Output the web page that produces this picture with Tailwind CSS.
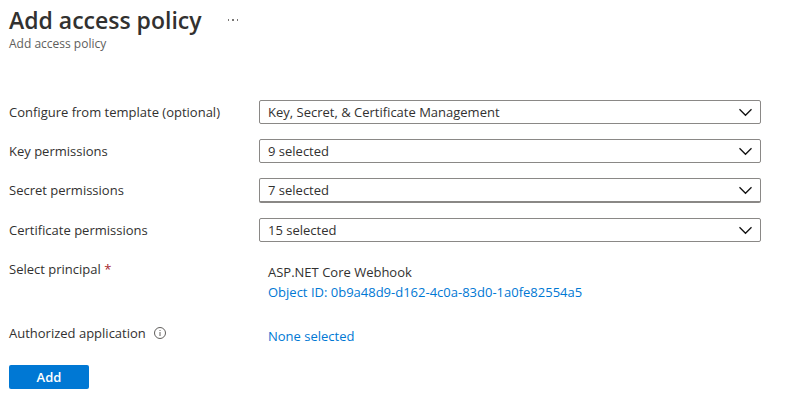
<!DOCTYPE html>
<html lang="en">
<head>
<meta charset="utf-8">
<meta name="viewport" content="width=device-width, initial-scale=1">
<title>Add access policy</title>
<script src="https://cdn.jsdelivr.net/npm/@tailwindcss/browser@4"></script>
</head>
<body class="bg-white pl-[9px] pr-[27px] font-['Segoe_UI','Open_Sans',sans-serif] text-[13px] leading-5 text-[#323130]">
<header class="pt-1">
  <div class="flex items-center gap-[26px]">
    <h1 class="text-[23px] leading-8 font-semibold">Add access policy</h1>
    <button type="button" aria-label="More actions" class="flex h-5 w-3 items-center">
      <svg class="h-1 w-3" viewBox="0 0 12 4" fill="#797775" aria-hidden="true"><path d="M0 1h1v2H0zM4 1h2v2H4zM9 1h1v2H9z"/></svg>
    </button>
  </div>
  <p class="text-xs leading-4 text-[#605e5c]">Add access policy</p>
</header>
<main>
  <form class="pt-12">
    <div class="grid grid-cols-[250px_1fr] gap-y-[15px]">
      <label for="template" class="leading-6">Configure from template (optional)</label>
      <div class="grid">
        <select id="template" class="col-start-1 row-start-1 h-6 w-full appearance-none rounded-[2px] border border-[#8a8886] bg-white pl-2 pr-8"><option>Key, Secret, &amp; Certificate Management</option></select>
        <svg class="pointer-events-none col-start-1 row-start-1 mr-[9px] h-6 w-[13px] justify-self-end" viewBox="0 0 13 24" fill="none" stroke="#111" stroke-width="1.3" aria-hidden="true"><path d="M.5 9.3 6.5 15.3 12.5 9.3"/></svg>
      </div>
      <label for="key" class="leading-6">Key permissions</label>
      <div class="grid">
        <select id="key" class="col-start-1 row-start-1 h-6 w-full appearance-none rounded-[2px] border border-[#8a8886] bg-white pl-2 pr-8"><option>9 selected</option></select>
        <svg class="pointer-events-none col-start-1 row-start-1 mr-[9px] h-6 w-[13px] justify-self-end" viewBox="0 0 13 24" fill="none" stroke="#111" stroke-width="1.3" aria-hidden="true"><path d="M.5 9.3 6.5 15.3 12.5 9.3"/></svg>
      </div>
      <label for="secret" class="leading-6">Secret permissions</label>
      <div class="grid">
        <select id="secret" class="col-start-1 row-start-1 h-[25px] w-full appearance-none rounded-[2px] border border-b-2 border-[#8a8886] bg-white pl-2 pr-8"><option>7 selected</option></select>
        <svg class="pointer-events-none col-start-1 row-start-1 mr-[9px] h-6 w-[13px] justify-self-end" viewBox="0 0 13 24" fill="none" stroke="#111" stroke-width="1.3" aria-hidden="true"><path d="M.5 9.3 6.5 15.3 12.5 9.3"/></svg>
      </div>
      <label for="certificate" class="leading-6">Certificate permissions</label>
      <div class="grid">
        <select id="certificate" class="col-start-1 row-start-1 h-6 w-full appearance-none rounded-[2px] border border-[#8a8886] bg-white pl-2 pr-8"><option>15 selected</option></select>
        <svg class="pointer-events-none col-start-1 row-start-1 mr-[9px] h-6 w-[13px] justify-self-end" viewBox="0 0 13 24" fill="none" stroke="#111" stroke-width="1.3" aria-hidden="true"><path d="M.5 9.3 6.5 15.3 12.5 9.3"/></svg>
      </div>
    </div>
    <dl class="grid grid-cols-[250px_1fr] pt-[17px]">
      <dt>Select principal <span class="text-[#a4262c]">*</span></dt>
      <dd class="pt-[3px] pl-[9px]">
        <p>ASP.NET Core Webhook</p>
        <a href="#principal" class="text-[#0078d4]">Object ID: 0b9a48d9-d162-4c0a-83d0-1a0fe82554a5</a>
      </dd>
      <dt class="flex items-center gap-2 self-start pt-[21px]">Authorized application
        <svg class="size-3" viewBox="0 0 12 12" fill="none" stroke="#605e5c" role="img" aria-label="Information"><circle cx="6" cy="6" r="5.5"/><path d="M6 5v4M6 3v1"/></svg>
      </dt>
      <dd class="pt-6 pl-[9px]"><a href="#application" class="text-[#0078d4]">None selected</a></dd>
    </dl>
    <button type="button" class="mt-[19px] h-6 w-20 rounded-[2px] bg-[#0078d4] font-semibold text-white">Add</button>
  </form>
</main>
</body>
</html>
